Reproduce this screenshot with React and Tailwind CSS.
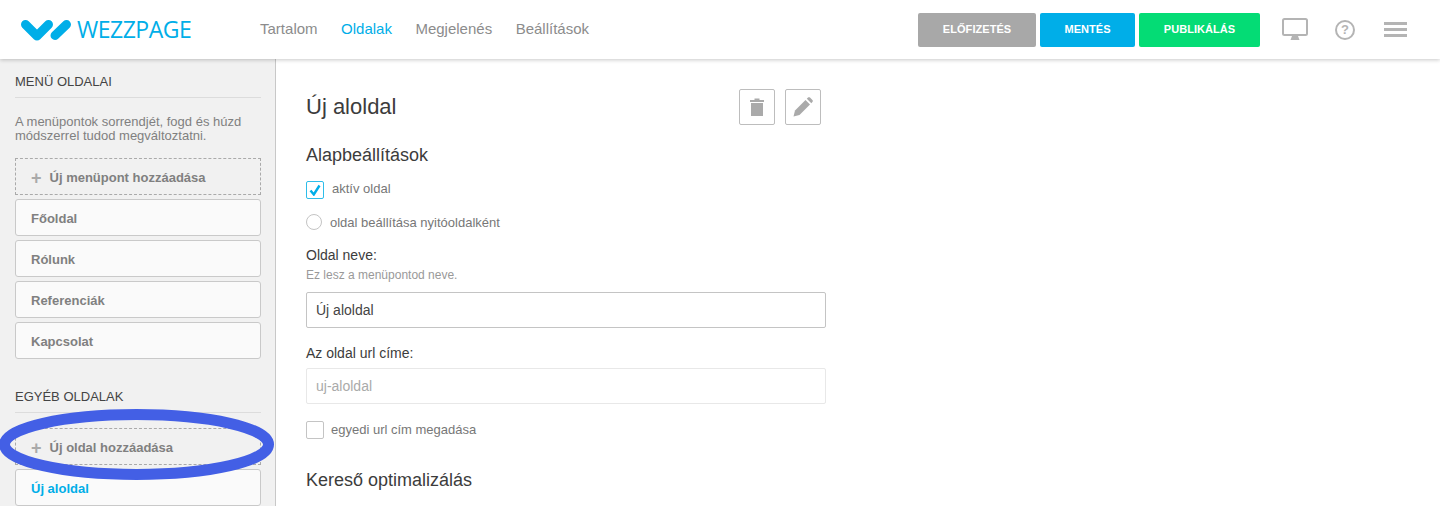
import React from 'react';

const Logo = () => (
    <div className="flex items-center">
        <svg width="50" height="22" viewBox="0 0 50 22" className="shrink-0">
            <path d="M4.5 5.5 L16 17 L27.5 5.5" fill="none" stroke="#00aee8" strokeWidth="9" strokeLinecap="round" strokeLinejoin="round" />
            <path d="M34 16.5 L45.5 5.5" fill="none" stroke="#00aee8" strokeWidth="9" strokeLinecap="round" />
        </svg>
        <span className="ml-[6px] font-['Open_Sans',sans-serif] text-[23px] leading-none tracking-[-0.5px] text-[#00aee8]">WEZZPAGE</span>
    </div>
);

const TopButton = ({ color, width, children }) => (
    <button className={`${color} ${width} h-[34px] rounded-[2px] text-[11px] font-bold tracking-[0.05px] text-white`}>
        {children}
    </button>
);

const PageItem = ({ children, active }) => (
    <div className={`flex h-[37px] items-center rounded-[3px] border border-[#c9c9c9] bg-[#fafafa] px-[15px] pt-[2px] text-[13px] font-bold ${active ? 'text-[#00aee8]' : 'text-[#808080]'}`}>
        {children}
    </div>
);

const AddItem = ({ children }) => (
    <div className="flex h-[37px] items-center border border-dashed border-[#aaaaaa] px-[15px] pt-[2px] text-[13px] font-bold text-[#808080]">
        <span className="mr-[8px] text-[18px] leading-none text-[#aaaaaa]">+</span>
        {children}
    </div>
);

const SectionTitle = ({ children }) => (
    <div className="border-b border-[#dcdcdc] pb-[7px] text-[13px] leading-[16px] text-[#444444]">{children}</div>
);

const Sidebar = () => (
    <aside className="h-full w-[276px] shrink-0 border-r border-[#c8c8c8] bg-[#f1f1f1] pl-[15px] pr-[14px] pt-[15px]">
        <SectionTitle>MENÜ OLDALAI</SectionTitle>
        <p className="mt-[17px] text-[13px] leading-[14px] text-[#808080]">
            A menüpontok sorrendjét, fogd és húzd módszerrel tudod megváltoztatni.
        </p>
        <div className="mt-[15px] flex flex-col gap-[4px]">
            <AddItem>Új menüpont hozzáadása</AddItem>
            <PageItem>Főoldal</PageItem>
            <PageItem>Rólunk</PageItem>
            <PageItem>Referenciák</PageItem>
            <PageItem>Kapcsolat</PageItem>
        </div>
        <div className="mt-[30px]">
            <SectionTitle>EGYÉB OLDALAK</SectionTitle>
        </div>
        <div className="mt-[15px] flex flex-col gap-[4px]">
            <AddItem>Új oldal hozzáadása</AddItem>
            <PageItem active>Új aloldal</PageItem>
        </div>
    </aside>
);

export default function App() {
    return (
        <div className="relative h-[506px] w-[1440px] overflow-hidden bg-white font-['Liberation_Sans',Arial,sans-serif]">
            <header className="relative z-10 flex h-[59px] items-center bg-white pl-[21px] shadow-[0_1px_4px_rgba(0,0,0,0.22)]">
                <Logo />
                <nav className="ml-[68.8px] flex gap-[23.5px] text-[15px] text-[#8c8c8c]">
                    <span>Tartalom</span>
                    <span className="text-[#00aee8]">Oldalak</span>
                    <span>Megjelenés</span>
                    <span>Beállítások</span>
                </nav>
                <div className="ml-[329px] flex gap-[4px]">
                    <TopButton color="bg-[#a8a8a8]" width="w-[118px]">ELŐFIZETÉS</TopButton>
                    <TopButton color="bg-[#00aee8]" width="w-[95px]">MENTÉS</TopButton>
                    <TopButton color="bg-[#04dc75]" width="w-[121px]">PUBLIKÁLÁS</TopButton>
                </div>
                <svg width="26" height="23" viewBox="0 0 26 23" className="ml-[22px] shrink-0">
                    <rect x="1" y="1" width="24" height="16" rx="1.5" fill="none" stroke="#b4b4b4" strokeWidth="2" />
                    <path d="M10 18h6l1.5 4h-9z" fill="#b4b4b4" />
                </svg>
                <div className="ml-[27px] flex h-[20px] w-[20px] shrink-0 items-center justify-center rounded-full border-2 border-[#b4b4b4] text-[13px] font-bold text-[#b4b4b4]">?</div>
                <div className="ml-[29px] flex w-[23px] shrink-0 flex-col gap-[3px]">
                    <div className="h-[3px] bg-[#b4b4b4]" />
                    <div className="h-[3px] bg-[#b4b4b4]" />
                    <div className="h-[3px] bg-[#b4b4b4]" />
                </div>
            </header>

            <div className="flex h-[447px]">
                <Sidebar />
                <main className="w-[550px] pl-[30px]">
                    <div className="mt-[30px] flex h-[36px] w-[515px] items-center justify-between">
                        <h1 className="pb-[2px] text-[22px] text-[#3c3c3c]">Új aloldal</h1>
                        <div className="flex gap-[10px]">
                            <div className="flex h-[36px] w-[36px] items-center justify-center rounded-[2px] border border-[#bdbdbd]">
                                <svg width="14" height="18" viewBox="0 0 14 18" fill="#aaaaaa">
                                    <path d="M0 2h4.5V0.5h5V2H14v2H0z" />
                                    <path d="M1 5h12v13H1z" />
                                </svg>
                            </div>
                            <div className="flex h-[36px] w-[36px] items-center justify-center rounded-[2px] border border-[#bdbdbd]">
                                <svg width="20" height="20" viewBox="0 0 20 20" fill="#aaaaaa">
                                    <path d="M0.5 19.5L2 13.5L12.5 3L17 7.5L6.5 18z" />
                                    <path d="M13.8 1.7L15 0.6C15.6 0 16.4 0 17 0.6L19.4 3C20 3.6 20 4.4 19.4 5L18.3 6.2z" />
                                </svg>
                            </div>
                        </div>
                    </div>

                    <h2 className="mt-[19px] text-[18px] leading-[22px] text-[#3c3c3c]">Alapbeállítások</h2>

                    <div className="mt-[15px] flex h-[18px] text-[13px] text-[#777777]">
                        <div className="flex h-[18px] w-[18px] items-center justify-center rounded-[2px] border border-[#2ebdea]">
                            <svg width="12" height="12" viewBox="0 0 12 12">
                                <path d="M1.5 6.5 L4.8 10.5 L10.5 1.5" fill="none" stroke="#00aee8" strokeWidth="2.4" />
                            </svg>
                        </div>
                        <span className="ml-[8px] leading-[15px]">aktív oldal</span>
                    </div>

                    <div className="mt-[15px] flex h-[16px] items-center text-[13px] text-[#777777]">
                        <div className="h-[16px] w-[16px] rounded-full border border-[#c4c4c4]" />
                        <span className="ml-[8px] pt-[1px]">oldal beállítása nyitóoldalként</span>
                    </div>

                    <div className="mt-[17px] text-[14px] leading-[16px] text-[#3c3c3c]">Oldal neve:</div>
                    <div className="mt-[5px] text-[12px] leading-[14px] text-[#999999]">Ez lesz a menüpontod neve.</div>
                    <div className="mt-[10px] flex h-[36px] w-[520px] items-center rounded-[2px] border border-[#c4c4c4] px-[9px] text-[14px] text-[#444444]">Új aloldal</div>

                    <div className="mt-[17px] text-[14px] leading-[16px] text-[#3c3c3c]">Az oldal url címe:</div>
                    <div className="mt-[7px] flex h-[36px] w-[520px] items-center rounded-[2px] border border-[#e8e8e8] px-[9px] text-[14px] text-[#aaaaaa]">uj-aloldal</div>

                    <div className="mt-[17px] flex h-[18px] items-center text-[13px] text-[#777777]">
                        <div className="h-[18px] w-[18px] rounded-[2px] border border-[#c4c4c4]" />
                        <span className="ml-[7px]">egyedi url cím megadása</span>
                    </div>

                    <h2 className="mt-[30px] text-[18px] leading-[22px] text-[#3c3c3c]">Kereső optimalizálás</h2>
                </main>
            </div>

            {/* hand-drawn highlight over the add page button */}
            <svg width="280" height="76" viewBox="0 0 280 76" className="absolute left-0 top-[407px] z-20">
                <ellipse cx="136.5" cy="37.5" rx="132" ry="30" fill="none" stroke="#435fe5" strokeWidth="11" />
            </svg>
        </div>
    );
}
